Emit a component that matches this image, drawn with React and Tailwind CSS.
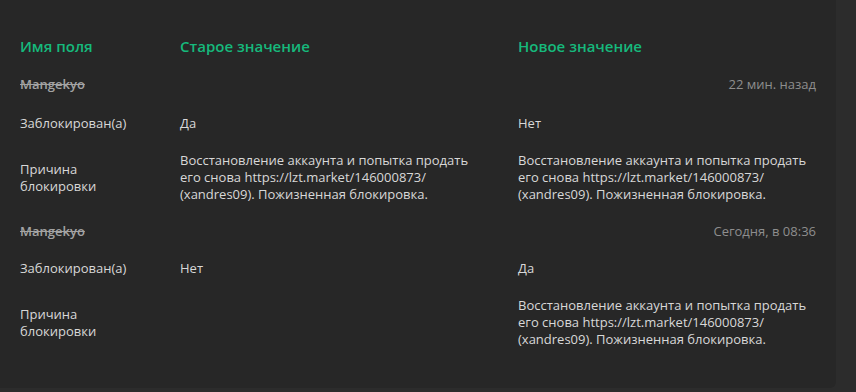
import React from "react";

const reason =
  "Восстановление аккаунта и попытка продать его снова https://lzt.market/146000873/ (xandres09). Пожизненная блокировка.";

function Cell({ children, className = "" }) {
  return <div className={"px-[10px] " + className}>{children}</div>;
}

function Group({ user, date, oldBlocked, newBlocked, oldReason, newReason, first }) {
  const userPad = first ? "pt-[10px] pb-[12px]" : "py-[10px]";
  return (
    <>
      <Cell className={userPad + " text-[#a3a3a3] font-semibold line-through"}>{user}</Cell>
      <Cell className={userPad + " col-span-2 text-right text-[#8e8e8e]"}>{date}</Cell>
      <Cell className="py-[10px]">Заблокирован(а)</Cell>
      <Cell className="py-[10px]">{oldBlocked}</Cell>
      <Cell className="py-[10px]">{newBlocked}</Cell>
      <Cell className="py-[10px] self-center">
        Причина
        <br />
        блокировки
      </Cell>
      <Cell className="py-[10px]">
        <div className="max-w-[300px]">
          {oldReason || <span>&nbsp;<br />&nbsp;<br />&nbsp;</span>}
        </div>
      </Cell>
      <Cell className="py-[10px]">
        <div className="max-w-[300px]">{newReason}</div>
      </Cell>
    </>
  );
}

export default function App() {
  return (
    <div
      className="w-[856px] h-[392px] bg-[#2c2c2c] overflow-hidden"
      style={{ fontFamily: '"Open Sans", "Noto Sans", sans-serif' }}
    >
      <div className="w-[836px] h-[388px] bg-[#272727] rounded-br-[6px] px-[10px] pt-[27px] text-[13px] leading-[17px] text-[#d8d8d8]">
        <div className="grid grid-cols-[160px_338px_1fr]">
          <div className="px-[10px] py-[10px] text-[15px] leading-[19px] font-semibold text-[#16b97c]">
            Имя поля
          </div>
          <div className="px-[10px] py-[10px] text-[15px] leading-[19px] font-semibold text-[#16b97c]">
            Старое значение
          </div>
          <div className="px-[10px] py-[10px] text-[15px] leading-[19px] font-semibold text-[#16b97c]">
            Новое значение
          </div>
          <Group
            first
            user="Mangekyo"
            date="22 мин. назад"
            oldBlocked="Да"
            newBlocked="Нет"
            oldReason={reason}
            newReason={reason}
          />
          <Group
            user="Mangekyo"
            date="Сегодня, в 08:36"
            oldBlocked="Нет"
            newBlocked="Да"
            oldReason={null}
            newReason={reason}
          />
        </div>
      </div>
    </div>
  );
}
